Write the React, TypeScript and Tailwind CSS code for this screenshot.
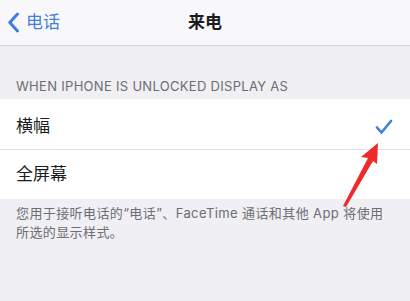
import React from 'react';

const font = { fontFamily: 'Inter, "Noto Sans CJK SC", sans-serif' };

const App: React.FC = () => {
  return (
    <div className="w-[410px] h-[301px] bg-[#efeff4] overflow-hidden relative" style={font}>
      {/* Nav bar */}
      <header className="h-[46px] bg-[#f8f8fa] border-b border-[#d3d3d8] grid grid-cols-3 items-center">
        <div className="flex items-center pl-[7px] text-[#3f7ee0]">
          <svg width="13" height="21" viewBox="0 0 13 21" className="shrink-0">
            <path d="M10.5 2 L2.8 10.5 L10.5 19" fill="none" stroke="#3f7ee0" strokeWidth="3" strokeLinecap="round" strokeLinejoin="round" />
          </svg>
          <span className="ml-[6px] text-[17px] leading-none">电话</span>
        </div>
        <div className="text-center text-[17px] font-semibold text-[#1c1c1e] leading-none">来电</div>
        <div />
      </header>

      {/* Section header */}
      <div className="pt-[32px] pb-[5px] px-4 text-[13px] leading-[16px] text-[#6d6d72] uppercase tracking-[0.3px]">
        When iPhone is unlocked display as
      </div>

      {/* Options */}
      <div className="bg-white">
        <div className="h-[51px] pt-[6px] px-4 flex items-center justify-between border-b border-[#e0e0e5]">
          <span className="text-[17px] text-[#1c1c1e]">横幅</span>
          <svg width="18" height="16" viewBox="0 0 18 16" className="mr-[1px]">
            <path d="M2 8.5 L6.5 13.5 L16 2" fill="none" stroke="#3f7ee0" strokeWidth="2.6" strokeLinecap="round" strokeLinejoin="round" />
          </svg>
        </div>
        <div className="h-[49px] px-4 flex items-center">
          <span className="text-[17px] text-[#1c1c1e]">全屏幕</span>
        </div>
      </div>

      {/* Footer */}
      <p className="pt-[5px] px-4 text-[13px] leading-[19px] text-[#6d6d72] tracking-[0.4px] whitespace-nowrap">
        您用于接听电话的“电话”、FaceTime 通话和其他 App 将使用
        <br />
        所选的显示样式。
      </p>

      {/* Red annotation arrow */}
      <svg className="absolute left-0 top-0 pointer-events-none" width="410" height="301" viewBox="0 0 410 301">
        <polygon points="378,143 361,157 368,158 343,206 346,207 373,161 377,164" fill="#ee2b2b" />
      </svg>
    </div>
  );
};

export default App;
